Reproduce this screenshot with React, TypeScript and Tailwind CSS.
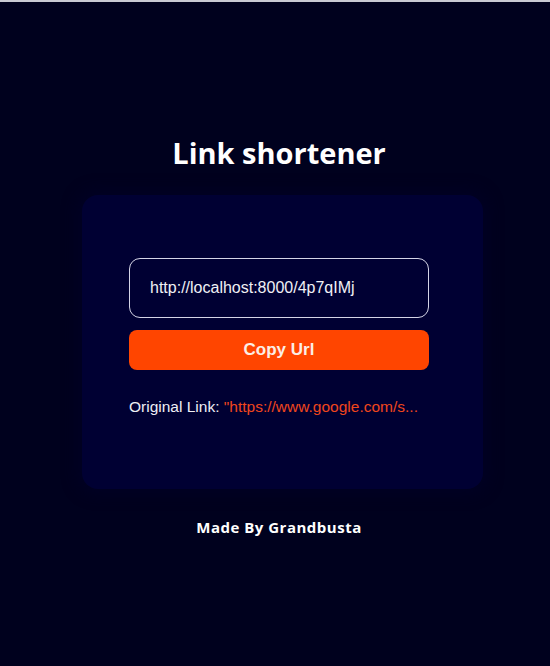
export default function App() {
  return (
    <div className="min-h-[666px] w-full bg-[#00011e] font-['Liberation_Sans',Arial,sans-serif]">
      <div className="h-[2px] w-full bg-[#c9cad3]" />
      <main className="flex flex-col items-center pl-2 pt-[132px]">
        <h1 className="font-['Open_Sans',sans-serif] text-[29px] font-bold leading-[38px] text-white">
          Link shortener
        </h1>
        <section className="mt-[23px] ml-[7px] w-[401px] rounded-2xl bg-[#000033] pl-[47px] pr-[54px] pt-[63px] pb-[72px] shadow-[0_0_14px_6px_rgba(0,0,40,0.55)]">
          <div className="flex h-[60px] items-center rounded-[11px] border border-[#d4d4e6] px-5 text-base text-[#f0f0f5]">
            http://localhost:8000/4p7qIMj
          </div>
          <button className="mt-3 h-10 w-full rounded-lg bg-[#ff4500] text-[17px] font-bold text-[#fbeee6]">
            Copy Url
          </button>
          <p className="mt-[27px] text-[15.5px] leading-5 text-[#eeeef5]">
            Original Link:{' '}
            <span className="text-[#f0461c]">"https://www.google.com/s...</span>
          </p>
        </section>
        <p className="mt-[27px] font-['Open_Sans',sans-serif] text-[15px] font-bold tracking-[0.5px] text-white">
          Made By Grandbusta
        </p>
      </main>
    </div>
  )
}
